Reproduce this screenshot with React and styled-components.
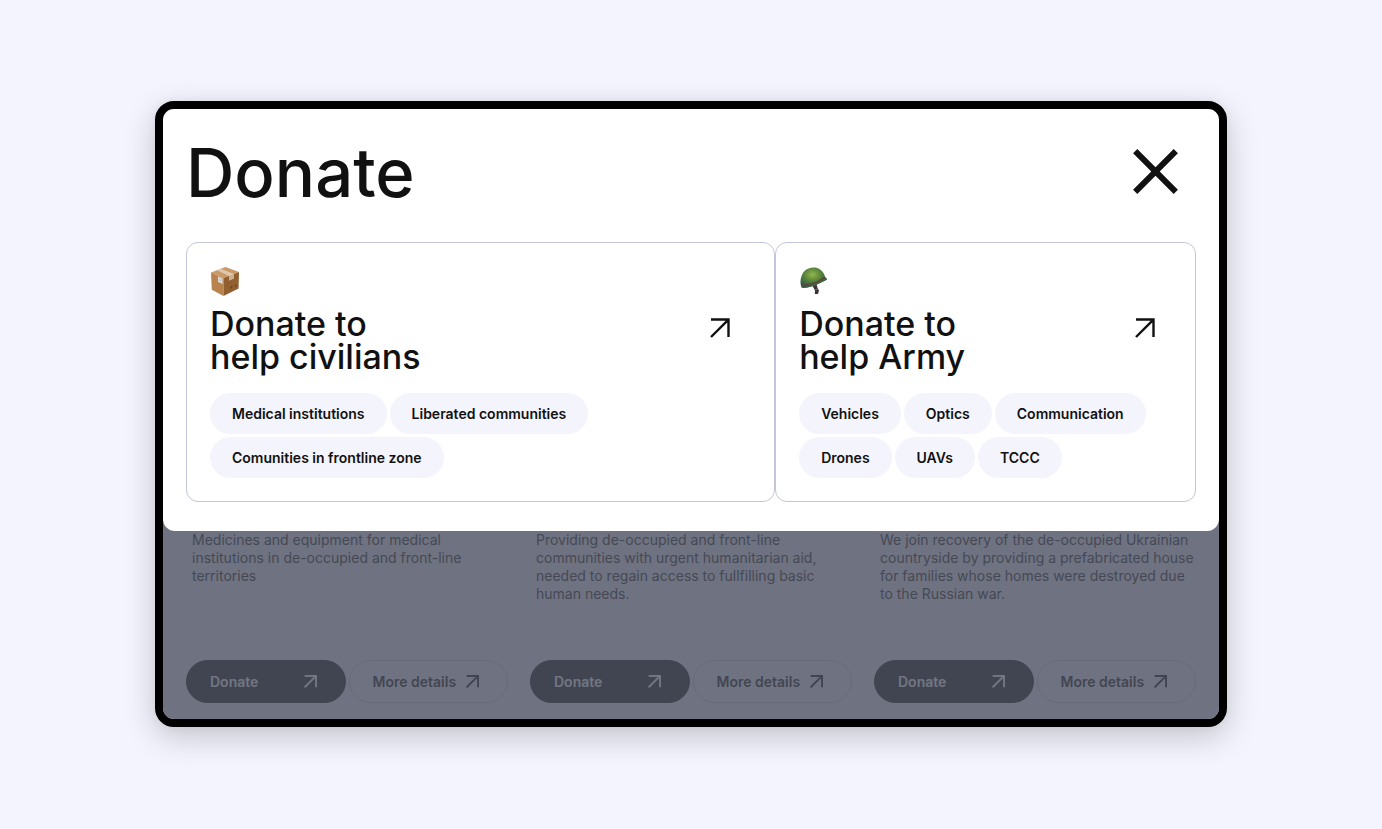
import React from 'react';
import styled, { createGlobalStyle } from 'styled-components';

const GlobalStyle = createGlobalStyle`
    * {
        box-sizing: border-box;
    }
    body {
        margin: 0;
        background: #f4f4fe;
        color: #111;
        font-family: Inter, "Liberation Sans", sans-serif;
    }
    h1, h2, p, ul {
        margin: 0;
        padding: 0;
        font-weight: inherit;
    }
    svg {
        display: block;
    }
    button {
        font-family: inherit;
        color: inherit;
        cursor: pointer;
    }
`

const Page = styled.div`
    display: flex;
    min-height: 100vh;
    padding: 101px 155px 102px;
    @media only screen and (max-width: 1100px) {
        padding: 24px;
    }
`

const Frame = styled.div`
    flex: 1;
    display: grid;
    overflow: hidden;
    border: 8px solid #000;
    border-radius: 19px;
    background: #f3f0fa;
    box-shadow: 0 10px 32px rgba(0, 0, 0, 0.2), 0 0 8px rgba(0, 0, 0, 0.05);
    > * {
        grid-area: 1 / 1;
    }
`

const Projects = styled.main`
    align-self: end;
    display: grid;
    grid-template-columns: repeat(3, 1fr);
    gap: 22px;
    padding: 422px 23px 16px;
`

const Project = styled.article`
    display: flex;
    flex-direction: column;
    justify-content: space-between;
    gap: 57px;
`

const ProjectText = styled.p`
    padding-left: 6px;
    color: #222;
    font-size: 14px;
    line-height: 18px;
`

const ProjectActions = styled.div`
    display: grid;
    grid-template-columns: 1fr 1fr;
    gap: 3px;
`

const PillButton = styled.button`
    display: flex;
    align-items: center;
    justify-content: space-between;
    height: 43px;
    padding: 0 28px 0 23px;
    border: 1px solid ${props => props.$filled ? '#111' : '#c8c8e0'};
    border-radius: 22px;
    background: ${props => props.$filled ? '#111' : 'transparent'};
    color: ${props => props.$filled ? '#fff' : '#111'};
    font-size: 14px;
    font-weight: 600;
    white-space: nowrap;
`

const Backdrop = styled.div`
    background: rgba(78, 83, 98, 0.8);
`

const Dialog = styled.section`
    align-self: start;
    padding: 32px 23px 29px;
    border-radius: 10px 10px 12px 12px;
    background: #fff;
`

const DialogHeader = styled.header`
    display: flex;
    align-items: center;
    justify-content: space-between;
    margin-bottom: 37px;
    padding-right: 18px;
`

const DialogTitle = styled.h1`
    font-size: 67px;
    font-weight: 500;
    line-height: 64px;
`

const CloseButton = styled.button`
    display: flex;
    padding: 0 0 4px;
    border: none;
    background: none;
`

const Options = styled.div`
    display: grid;
    grid-template-columns: 7fr 5fr;
    @media only screen and (max-width: 900px) {
        grid-template-columns: 1fr;
    }
`

const OptionCard = styled.article`
    padding: 23px;
    border: 1px solid #c3c6d6;
    border-radius: 12px;
`

const OptionLink = styled.a`
    display: flex;
    align-items: flex-start;
    justify-content: space-between;
    margin: 11px 0 20px;
    color: inherit;
    text-decoration: none;
    svg {
        margin: 11px ${props => props.$inset}px 0 0;
    }
`

const OptionTitle = styled.h2`
    font-size: 34px;
    font-weight: 500;
    line-height: 33px;
`

const TagList = styled.ul`
    display: flex;
    flex-wrap: wrap;
    gap: 3px;
    list-style: none;
`

const Tag = styled.li`
    padding: 0 22px;
    border-radius: 21px;
    background: #f4f4fc;
    font-size: 14px;
    font-weight: 600;
    line-height: 41px;
`

const Arrow = ({ size, stroke }) => (
    <svg width={size} height={size} viewBox="0 0 20 20" fill="none" stroke="currentColor" strokeWidth={stroke} aria-hidden="true">
        <path d="M1 1.5H18.5V19M18.2 1.8L1 19" />
    </svg>
)

const BoxIcon = () => (
    <svg width="30" height="30" viewBox="0 0 30 30" aria-hidden="true">
        <path d="M1 6.5L15.5 1L29 6L13.5 12Z" fill="#c99a67" />
        <path d="M1 6.5L13.5 12V30L1.8 23.8Z" fill="#b98350" />
        <path d="M13.5 12L29 6L28.6 22.5L13.5 30Z" fill="#925f2f" />
        <path d="M7 4.2L10.6 2.8L24 8V12.5L19 14.4V9.9Z" fill="#dfc6ae" />
        <path d="M19 9.9L24 8V12.5L19 14.4Z" fill="#cbb094" />
        <path d="M8 10.5L12.6 12.4V18L8 16Z" fill="#dcdcdc" />
        <path d="M9.2 12.4L11.4 13.3V15.4L9.2 14.5Z" fill="#c4c4c4" />
        <path d="M20 20.5L22.4 19.5V22L20 23ZM24.8 18.7L26.8 17.9V20.2L24.8 21Z" fill="#7a4c24" />
    </svg>
)

const HelmetIcon = () => (
    <svg width="30" height="30" viewBox="0 0 30 30" aria-hidden="true">
        <defs>
            <radialGradient id="helmet" cx="0.45" cy="0.35" r="0.6">
                <stop offset="0" stopColor="#93b54c" />
                <stop offset="0.55" stopColor="#56823a" />
                <stop offset="1" stopColor="#2f5c4c" />
            </radialGradient>
        </defs>
        <path d="M13.5 20L17.5 18L18.5 22L20 24.5L19 28L15.8 28L16 24.5Z" fill="#413334" />
        <path d="M16.4 23.5L19.2 23.2" stroke="#8a7777" strokeWidth="0.8" />
        <path d="M2.2 20.5C0.6 15 2 9 5.5 5C9 1.5 15.5 0.2 20 2.8C23.5 4.8 25.4 8 26 10.8L28.2 13C27 14.8 24 15 20 17.3C14 20.5 6 22.8 2.9 21.6C2.5 21.4 2.3 21 2.2 20.5Z" fill="url(#helmet)" />
        <path d="M2 18.4C10 18.5 19.5 15.5 25.7 10.2L26.3 12.2C20 17 11 20.5 2.3 20.4Z" fill="#5d483b" />
        <path d="M2.8 21.2C9 22 19 18.5 28 13" fill="none" stroke="#37674a" strokeWidth="1" />
    </svg>
)

const CloseIcon = () => (
    <svg width="45" height="45" viewBox="0 0 45 45" fill="none" stroke="#111" strokeWidth="6" aria-hidden="true">
        <path d="M2.2 2.2L42.8 42.8M42.8 2.2L2.2 42.8" />
    </svg>
)

const projects = [
    'Medicines and equipment for medical institutions in de-occupied and front-line territories',
    'Providing de-occupied and front-line communities with urgent humanitarian aid, needed to regain access to fullfilling basic human needs.',
    'We join recovery of the de-occupied Ukrainian countryside by providing a prefabricated house for families whose homes were destroyed due to the Russian war.',
]

const options = [
    {
        icon: <BoxIcon />,
        title: ['Donate to', 'help civilians'],
        href: '#civilians',
        inset: 21,
        tags: ['Medical institutions', 'Liberated communities', 'Comunities in frontline zone'],
    },
    {
        icon: <HelmetIcon />,
        title: ['Donate to', 'help Army'],
        href: '#army',
        inset: 17,
        tags: ['Vehicles', 'Optics', 'Communication', 'Drones', 'UAVs', 'TCCC'],
    },
]

const App = () => {
    return <>
        <GlobalStyle />
        <Page>
            <Frame>
                <Projects>
                    {projects.map(text => (
                        <Project key={text}>
                            <ProjectText>{text}</ProjectText>
                            <ProjectActions>
                                <PillButton type="button" $filled>
                                    Donate
                                    <Arrow size={13} stroke={3} />
                                </PillButton>
                                <PillButton type="button">
                                    More details
                                    <Arrow size={13} stroke={3} />
                                </PillButton>
                            </ProjectActions>
                        </Project>))}
                </Projects>
                <Backdrop />
                <Dialog role="dialog" aria-labelledby="dialog-title">
                    <DialogHeader>
                        <DialogTitle id="dialog-title">Donate</DialogTitle>
                        <CloseButton type="button" aria-label="Close">
                            <CloseIcon />
                        </CloseButton>
                    </DialogHeader>
                    <Options>
                        {options.map(option => (
                            <OptionCard key={option.href}>
                                {option.icon}
                                <OptionLink href={option.href} $inset={option.inset}>
                                    <OptionTitle>
                                        {option.title[0]}<br />{option.title[1]}
                                    </OptionTitle>
                                    <Arrow size={20} stroke={2.4} />
                                </OptionLink>
                                <TagList>
                                    {option.tags.map(tag => <Tag key={tag}>{tag}</Tag>)}
                                </TagList>
                            </OptionCard>))}
                    </Options>
                </Dialog>
            </Frame>
        </Page>
    </>
}

export default App;
